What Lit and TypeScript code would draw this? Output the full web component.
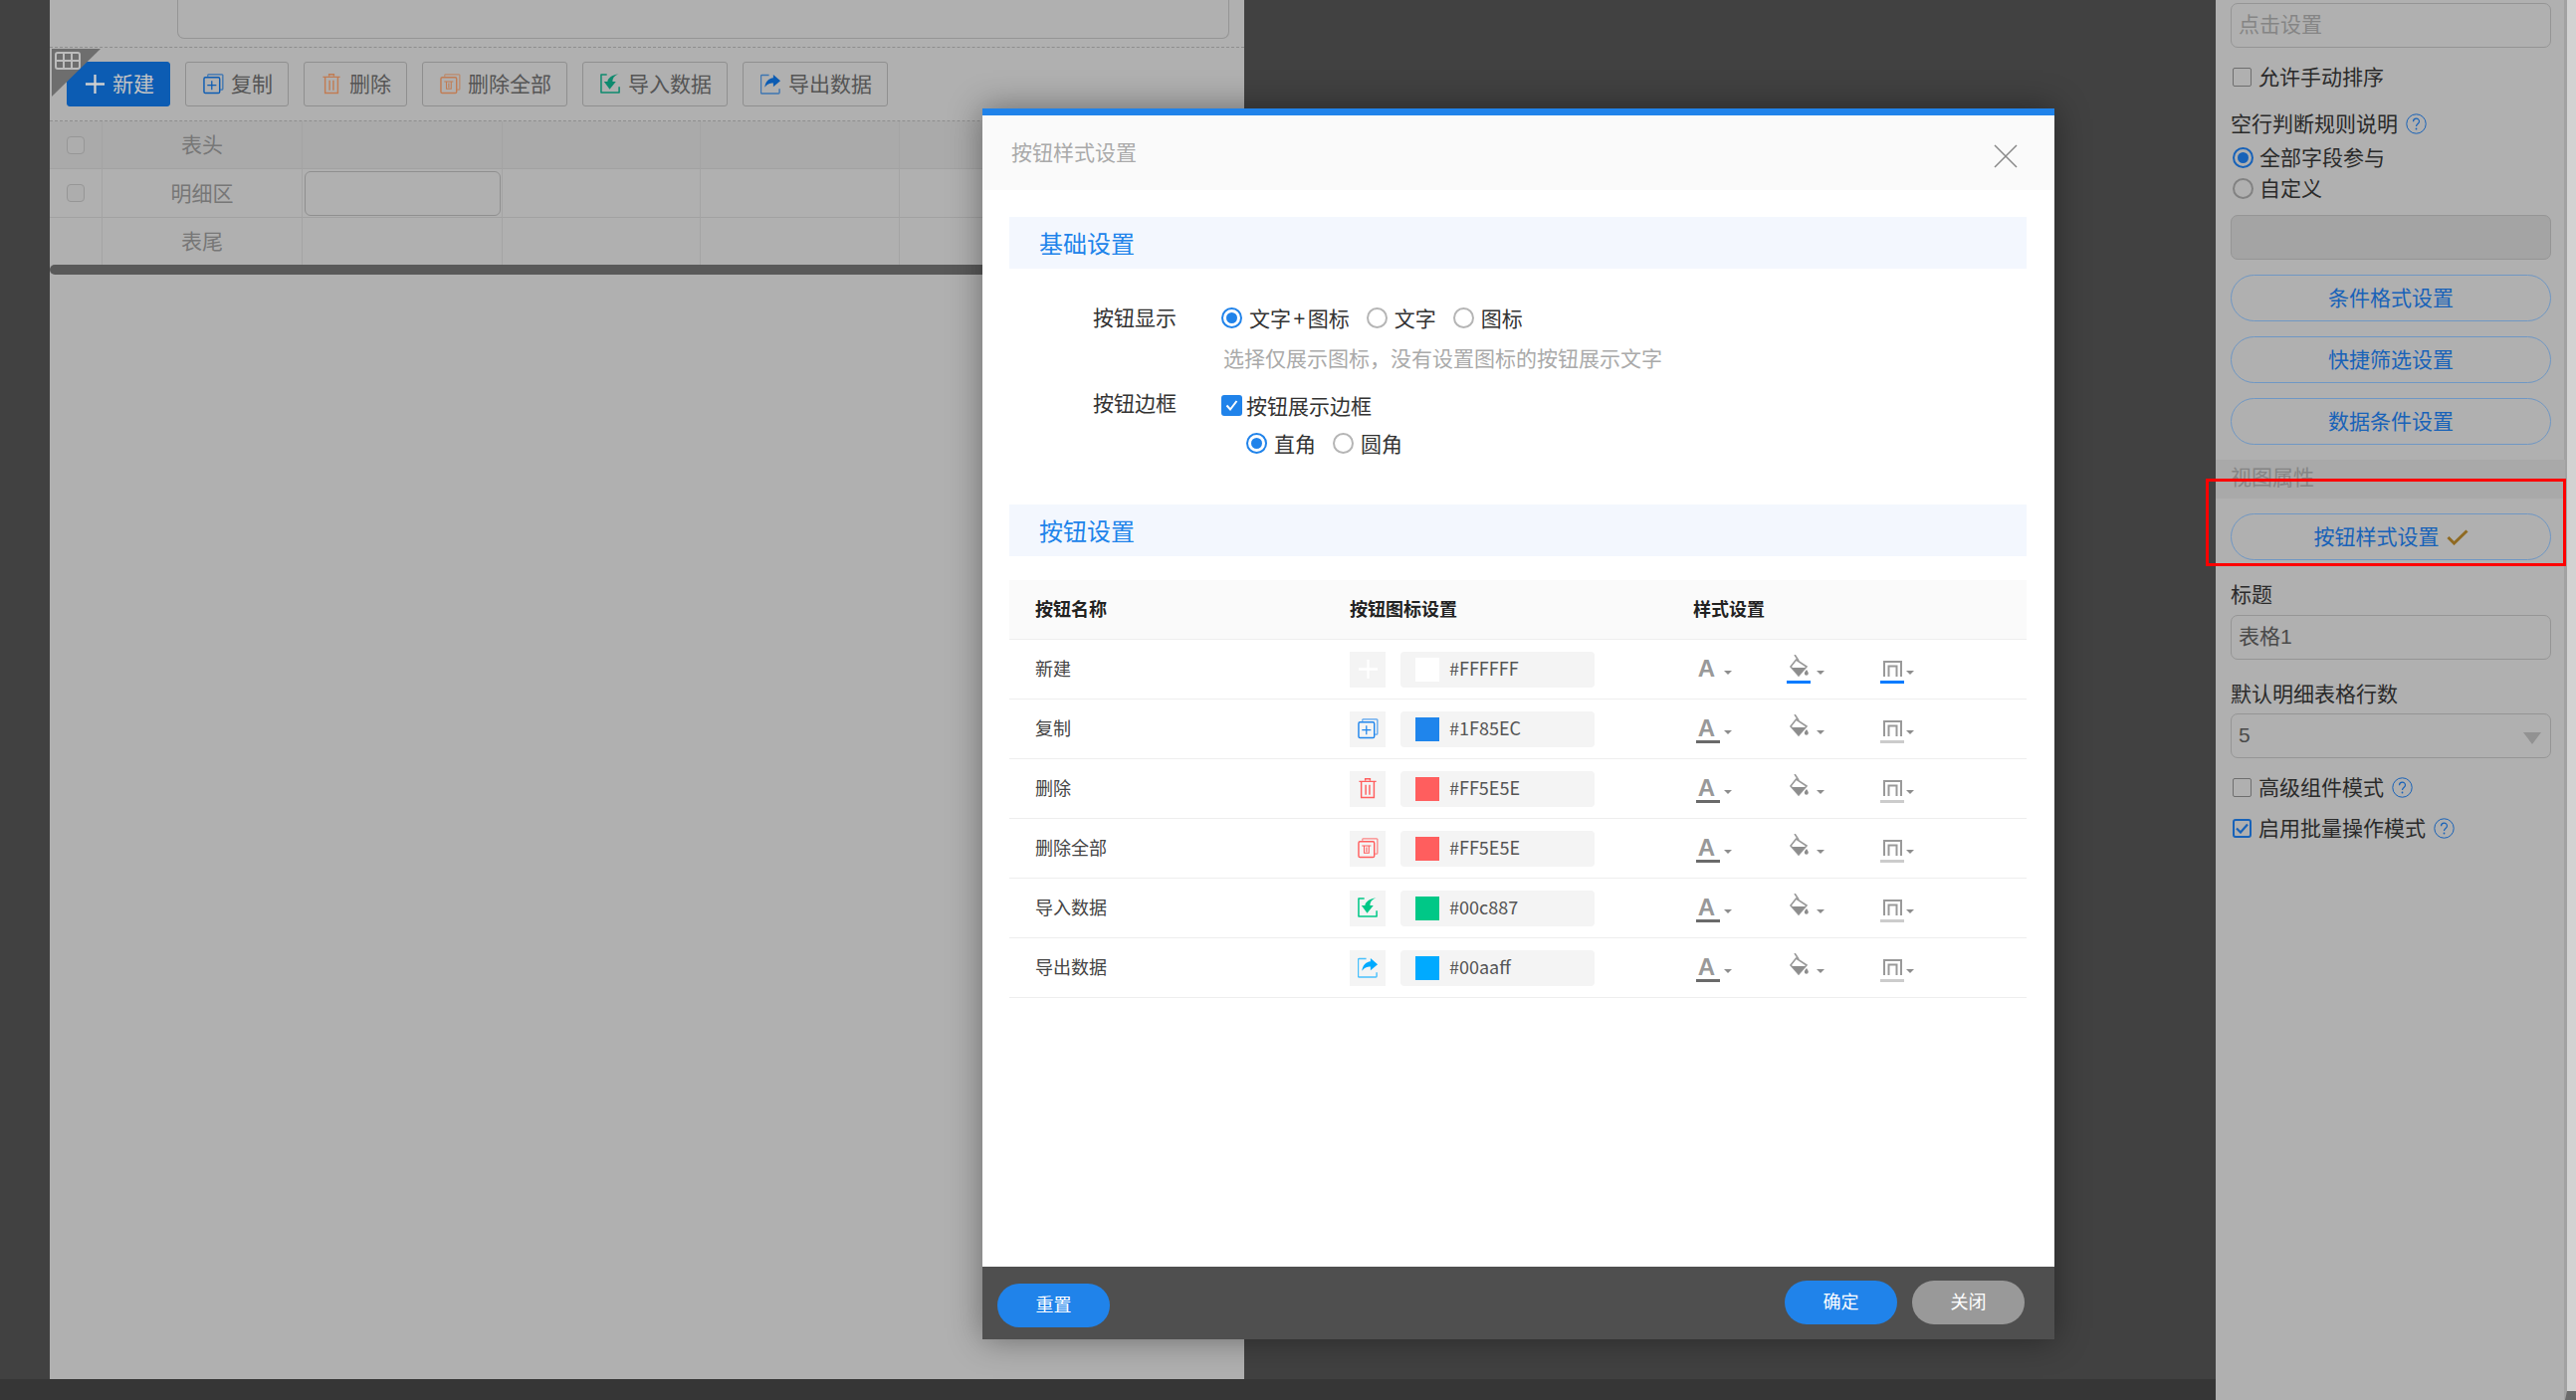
import {LitElement, html, css, svg} from 'lit';
import {customElement} from 'lit/decorators.js';

const plusIcon = (c: string) => svg`<path d="M1 11h20M11 1v20" fill="none" stroke=${c} stroke-width="2.4"/>`;
const copyIcon = (c: string) => svg`
  <path d="M5 3V1.500A1 1 0 0 1 6 .8h13.800A1 1 0 0 1 20.800 2v14a1 1 0 0 1-1 1H18" fill="none" stroke=${c} stroke-width="1.300" opacity=".75"/>
  <rect x="1" y="4" width="16.500" height="16.500" rx="1.500" fill="none" stroke=${c} stroke-width="1.500"/>
  <path d="M4.500 12.200h9.500M9.200 7.500v9.500" fill="none" stroke=${c} stroke-width="1.300"/>`;
const trashIcon = (c: string) => svg`
  <path d="M8 2.500V.8h5v1.700M1.500 3.500h18" fill="none" stroke=${c} stroke-width="1.500"/>
  <path d="M3.800 4v16.500h13.400V4M8.500 7v10.500M12.500 7v10.500" fill="none" stroke=${c} stroke-width="1.500"/>`;
const trashAllIcon = (c: string) => svg`
  <path d="M5 3V1.500A1 1 0 0 1 6 .8h13.800A1 1 0 0 1 20.800 2v14a1 1 0 0 1-1 1H18" fill="none" stroke=${c} stroke-width="1.300" opacity=".75"/>
  <rect x="1" y="4" width="16.500" height="16.500" rx="1.500" fill="none" stroke=${c} stroke-width="1.500"/>
  <path d="M4.500 8.300h9.500M6.800 8.500v7.500h5V8.500M9.300 10v5" fill="none" stroke=${c} stroke-width="1.100"/>`;
const importIcon = (c: string) => svg`
  <path d="M7 1H1v19h19v-6" fill="none" stroke=${c} stroke-width="1.600" stroke-linejoin="round"/>
  <path d="M18 .5c-5 1.500-6.500 4.500-6.500 8H15l-6.500 8-6-8h3.700C6.500 5 10.500 1 18 .5z" fill=${c} transform="translate(1.500 0)"/>`;
const exportIcon = (c: string) => svg`
  <path d="M9 1.500H1.500a1 1 0 0 0-1 1V20a1 1 0 0 0 1 1H19a1 1 0 0 0 1-1v-4" fill="none" stroke=${c} stroke-width="1.500" opacity=".7"/>
  <path d="M13.500 1 21 7.500 13.500 14v-4c-4 0-6.500 1-9 4.500 .5-5.500 4-9.500 9-10z" fill=${c}/>`;

const icon = (body: unknown, size = 21) =>
  html`<svg width=${size} height=${size} viewBox="0 0 22 22">${body}</svg>`;

const help = html`<svg class="help" width="21" height="21" viewBox="0 0 21 21">
  <circle cx="10.500" cy="10.500" r="9.700" fill="none" stroke="currentColor" stroke-width="1"/>
  <path d="M7.500 8.200c0-4 6-4 6 -.2 0 2.500-3 2.500-3 5" fill="none" stroke="currentColor" stroke-width="1.200"/>
  <circle cx="10.500" cy="15.500" r=".9" fill="currentColor"/>
</svg>`;

const toolbar = [
  {name: '复制', icon: copyIcon, color: '#0c5cb3'},
  {name: '删除', icon: trashIcon, color: '#c17c53'},
  {name: '删除全部', icon: trashAllIcon, color: '#c17c53'},
  {name: '导入数据', icon: importIcon, color: '#0e8a6e'},
  {name: '导出数据', icon: exportIcon, color: '#0c5cb3'},
];

const rows = [
  {name: '新建', icon: plusIcon, color: '#FFFFFF', hex: '#FFFFFF', first: true},
  {name: '复制', icon: copyIcon, color: '#1F85EC', hex: '#1F85EC', first: false},
  {name: '删除', icon: trashIcon, color: '#FF5E5E', hex: '#FF5E5E', first: false},
  {name: '删除全部', icon: trashAllIcon, color: '#FF5E5E', hex: '#FF5E5E', first: false},
  {name: '导入数据', icon: importIcon, color: '#00c887', hex: '#00c887', first: false},
  {name: '导出数据', icon: exportIcon, color: '#00aaff', hex: '#00aaff', first: false},
];

const gridCols = [53, 201, 201, 199, 200, 201, 145];

@customElement('app-root')
export class AppRoot extends LitElement {
  static styles = css`
    :host {
      display: block;
      position: relative;
      width: 2588px;
      height: 1407px;
      overflow: hidden;
      background: #414141;
      color: #333;
      font: 21px/30px "Noto Sans CJK SC", "Noto Sans", sans-serif;
    }
    * { box-sizing: border-box; }
    .page { display: flex; height: 100%; }
    .left { width: 2226px; display: flex; flex-direction: column; }
    .work { flex: 1; padding-left: 50px; }
    .statusbar { height: 21px; background: #363636; }

    /* canvas on the left */
    .canvas { position: relative; width: 1200px; height: 100%; background: #b0b0b0; }
    .topbox {
      width: 1057px; height: 39px; margin-left: 128px;
      border: 1px solid #959595; border-top: 0; border-radius: 0 0 7px 7px;
    }
    .toolbar {
      display: flex; gap: 15px; height: 75px; margin-top: 8px; padding: 14px 17px;
      border-top: 1px dashed #8e8e8e; border-bottom: 1px dashed #8e8e8e;
    }
    .tb {
      display: flex; align-items: center; gap: 7px; height: 45px; padding: 0 15px 0 17px;
      border: 1px solid #8f8f8f; border-radius: 3px; color: #555; white-space: nowrap;
    }
    .tb span { margin-bottom: 3px; }
    .tb.primary { background: #0c5cb3; border-color: #0c5cb3; color: #c4c4c4; }
    .corner {
      position: absolute; left: 2px; top: 49px; width: 49px; height: 48px;
      background: #6e6e6e; clip-path: polygon(0 0, 100% 0, 0 100%);
    }
    .corner-grid { position: absolute; left: 5px; top: 52px; }
    .grid { display: grid; }
    .cell {
      height: 49px; display: flex; align-items: center; justify-content: center;
      border-right: 1px solid #a4a4a4; border-bottom: 1px solid #a2a2a2; color: #777;
    }
    .cell.head { height: 48px; background: #aaaaaa; }
    .cell.end { border-bottom: 0; height: 47px; }
    .cell .lab { margin-bottom: 3px; }
    .cb {
      width: 18px; height: 18px; border: 1px solid #969696; border-radius: 4px; background: #adadad;
    }
    .slot { width: 197px; height: 45px; border: 1px solid #8f8f8f; border-radius: 6px; }
    .hscroll { height: 10px; background: #595959; border-radius: 5px 0 0 5px; }

    /* property panel on the right */
    .panel {
      position: relative; width: 351px; background: #b0b0b0; color: #2a2a2a;
      box-shadow: inset -1px 0 #a2a2a2;
      font-family: "Liberation Sans", "Noto Sans CJK SC", sans-serif;
    }
    .strip { width: 11px; background: #d2d2d2; border-left: 2px solid #a2a2a2; border-bottom: 9px solid #6a6a6a; }
    .field {
      display: flex; align-items: center; height: 45px; margin: 0 15px; padding: 0 7px 1px;
      border: 1px solid #959595; border-radius: 7px; color: #4a4a4a; position: relative;
    }
    .panel > * { width: 322px; }
    .field.hint { color: #858585; }
    .field.off { background: #a4a4a4; }
    .line { display: flex; align-items: center; height: 30px; margin: 0 15px; padding: 0 0 1px 2px; }
    .line.flat { padding-left: 0; }
    .help { color: #1862b8; flex: none; }
    .line .help { margin-left: 8px; }
    .box { width: 19px; height: 19px; margin-right: 7px; border: 1px solid #6e6e6e; border-radius: 2px; flex: none; }
    .box.on { display: flex; align-items: center; justify-content: center; border: 2px solid #1862b8; border-radius: 3px; }
    .dot {
      display: flex; align-items: center; justify-content: center; flex: none;
      width: 21px; height: 21px; border: 2px solid #828282; border-radius: 50%; margin-right: 6px;
    }
    .dot.on { border-color: #1862b8; }
    .dot.on::after { content: ""; width: 11px; height: 11px; border-radius: 50%; background: #1862b8; }
    .pill {
      display: flex; align-items: center; justify-content: center; gap: 7px; height: 47px; margin: 15px 15px 0;
      border: 1px solid #6f97c4; border-radius: 24px; color: #1862b8;
    }
    .panel > .secline {
      width: 351px; height: 39px; margin-top: 15px; padding: 3px 0 0 15px; background: #a9a9a9; color: #858585;
    }
    .caret-big {
      position: absolute; right: 9px; top: 18px; width: 0; height: 0;
      border: 9.500px solid transparent; border-top: 12px solid #929292; border-bottom: 0;
    }
    .panel > .marker {
      position: absolute; left: -10px; top: 481px; width: 362px; height: 88px; border: 3px solid #ff0000;
    }

    /* dialog */
    .modal {
      position: absolute; left: 987px; top: 109px; width: 1077px; height: 1237px;
      display: flex; flex-direction: column; background: #fff;
      border-top: 7px solid #2083ea; box-shadow: 0 0 32px rgba(0, 0, 0, .4);
    }
    .mhead {
      display: flex; align-items: center; justify-content: space-between; height: 75px;
      padding: 0 37px 0 29px; background: #fafafa; color: #aaa; flex: none;
    }
    .mhead span { margin-bottom: 3px; }
    .mhead svg { margin-top: 7px; }
    .mbody { flex: 1; padding: 27px 28px 0 27px; }
    .sec {
      height: 52px; padding-left: 30px; background: #f3f7fe; color: #2083ea;
      font-size: 24px; line-height: 51px;
    }
    .form { height: 237px; padding: 35px 0 0 84px; color: #333; }
    .frow { display: flex; }
    .flabel { width: 129px; height: 28px; line-height: 27px; flex: none; }
    .flabel.low { margin-top: 2px; }
    .opts { display: flex; align-items: center; height: 28px; line-height: 26px; }
    .opts .dot { margin-right: 7px; border-color: #b5b5b5; }
    .opts .dot.on { border-color: #2083ea; }
    .opts .dot.on::after { background: #2083ea; }
    .opts span + .dot { margin-left: 17px; }
    .opts .wide em { margin: 0 2.500px; font-style: normal; }
    .fhint { height: 28px; margin: 13px 0 15px 129px; padding-left: 2px; line-height: 26px; color: #aaa; }
    .tick {
      display: flex; align-items: center; justify-content: center;
      width: 21px; height: 21px; margin-right: 4px; border-radius: 3px; background: #2083ea;
    }
    .sub { display: flex; flex-direction: column; gap: 10px; margin-top: 4px; }
    .sub .opts { padding-left: 25px; }
    .sub .opts.flush { padding-left: 0; }
    .tbl { margin-top: 24px; font-size: 18px; color: #444; }
    .tr { display: grid; grid-template-columns: 342px 345px 1fr; height: 60px; border-bottom: 1px solid #eee; align-items: center; }
    .tr.th { height: 60px; background: #fafafa; color: #222; font-weight: 700; }
    .tr .nm { padding-bottom: 3px; }
    .tr > :first-child { padding-left: 26px; }
    .pick { display: flex; align-items: center; gap: 15px; }
    .tile { display: flex; align-items: center; justify-content: center; width: 36px; height: 36px; background: #f4f4f4; }
    .color {
      display: flex; align-items: center; gap: 10px; width: 195px; height: 36px; padding-left: 15px;
      border-radius: 4px; background: #f4f4f4; color: #555;
    }
    .color b { font-weight: 400; margin-bottom: 3px; }
    .swatch { width: 24px; height: 24px; }
    .tools { display: flex; align-self: start; padding: 15px 0 0 3px; }
    .tool { position: relative; height: 29px; }
    .tool i { display: block; width: 24px; height: 3px; margin-top: 2px; }
    .gl { display: block; width: 24px; height: 24px; }
    .letter {
      padding-right: 3px; font: 700 24px/27px "Liberation Sans", sans-serif; color: #999; text-align: center;
    }
    .caret {
      position: absolute; top: 16px; width: 0; height: 0;
      border: 4px solid transparent; border-top: 4px solid #8d8d8d; border-bottom: 0;
    }
    .mfoot {
      display: flex; justify-content: space-between; height: 73px; flex: none;
      padding: 14px 30px 0 15px; background: #4f4f4f;
    }
    .fbtn {
      display: flex; align-items: center; justify-content: center; width: 113px; height: 44px;
      padding-bottom: 4px; border-radius: 22px; background: #2083ea; color: #fff; font-size: 18px;
    }
    .fbtn.low { margin-top: 3px; }
    .fbtn.grey { background: #999; }
    .fright { display: flex; gap: 15px; }
  `;

  private renderTool(width: number, caret: number, under: string, glyph: unknown) {
    return html`<div class="tool" style="width:${width}px">
      ${glyph}
      <i style="background:${under}"></i>
      <span class="caret" style="left:${caret}px"></span>
    </div>`;
  }

  private renderCanvas() {
    const labels = ['表头', '明细区', '表尾'];
    return html`<div class="canvas">
      <div class="topbox"></div>
      <div class="toolbar">
        <div class="tb primary">${icon(plusIcon('#d0d0d0'))}<span>新建</span></div>
        ${toolbar.map(b => html`<div class="tb">${icon(b.icon(b.color))}<span>${b.name}</span></div>`)}
      </div>
      <div class="corner"></div>
      <svg class="corner-grid" width="26" height="18" viewBox="0 0 26 18">
        <rect x="1" y="1" width="24" height="16" rx="2" fill="none" stroke="#bcbcbc" stroke-width="2"/>
        <path d="M9 1v16M17 1v16M1 9h24" stroke="#bcbcbc" stroke-width="2"/>
      </svg>
      <div class="grid" style="grid-template-columns:${gridCols.map(w => w + 'px').join(' ')}">
        ${labels.map((label, r) =>
          gridCols.map((_, c) => html`<div class="cell ${r === 0 ? 'head' : ''} ${r === 2 ? 'end' : ''}">
            ${c === 0 && r < 2 ? html`<span class="cb"></span>` : ''}
            ${c === 1 ? html`<span class="lab">${label}</span>` : ''}
            ${c === 2 && r === 1 ? html`<span class="slot"></span>` : ''}
          </div>`)
        )}
      </div>
      <div class="hscroll"></div>
    </div>`;
  }

  private renderPanel() {
    const check = html`<svg width="13" height="11" viewBox="0 0 13 11"><path d="M1 5.500 5 9.500 12 1.500" fill="none" stroke="#1862b8" stroke-width="2.200"/></svg>`;
    return html`<div class="panel">
      <div class="field hint" style="margin-top:3px">点击设置</div>
      <div class="line" style="margin-top:15px"><span class="box"></span>允许手动排序</div>
      <div class="line flat" style="margin-top:17px">空行判断规则说明${help}</div>
      <div class="line" style="margin-top:4px"><span class="dot on"></span>全部字段参与</div>
      <div class="line" style="margin-top:1px"><span class="dot"></span>自定义</div>
      <div class="field off" style="margin-top:11px"></div>
      <div class="pill">条件格式设置</div>
      <div class="pill">快捷筛选设置</div>
      <div class="pill">数据条件设置</div>
      <div class="secline">视图属性</div>
      <div class="pill">按钮样式设置
        <svg width="22" height="16" viewBox="0 0 22 16"><path d="M1.500 8 7.500 14 20.500 1.500" fill="none" stroke="#8f6a22" stroke-width="3"/></svg>
      </div>
      <div class="line flat" style="margin-top:20px">标题</div>
      <div class="field" style="margin-top:5px">表格1</div>
      <div class="line flat" style="margin-top:20px">默认明细表格行数</div>
      <div class="field" style="margin-top:4px">5<span class="caret-big"></span></div>
      <div class="line" style="margin-top:15px"><span class="box"></span>高级组件模式${help}</div>
      <div class="line" style="margin-top:11px"><span class="box on">${check}</span>启用批量操作模式${help}</div>
      <div class="marker"></div>
    </div>`;
  }

  private renderRow(row: typeof rows[number]) {
    const bucket = html`<svg class="gl" viewBox="0 0 24 24">
      <path d="M8 0 12 6" stroke="#999" stroke-width="1.600" fill="none"/>
      <path d="M4 12 9.500 5 20 12 12 21z" fill="none" stroke="#999" stroke-width="1.600"/>
      <path d="M5 13H19L12 21z" fill="#8d8d8d"/>
      <path d="M22 16c-1.500 2-2.200 2.800-2.200 3.700a2 2 0 0 0 4 0c0-.9-.6-1.700-1.800-3.700z" fill="#8d8d8d" transform="translate(-2 -1)"/>
    </svg>`;
    const frame = html`<svg class="gl" viewBox="0 0 24 24">
      <path d="M4 22V7H21V22M8.500 22V11.500H16.500V22" fill="none" stroke="#999" stroke-width="2"/>
    </svg>`;
    return html`<div class="tr">
      <div class="nm">${row.name}</div>
      <div class="pick">
        <span class="tile">${icon(row.icon(row.color))}</span>
        <span class="color"><span class="swatch" style="background:${row.color}"></span><b>${row.hex}</b></span>
      </div>
      <div class="tools">
        ${this.renderTool(91, 28, row.first ? '#fff' : '#6a6a6a', html`<span class="gl letter">A</span>`)}
        ${this.renderTool(94, 30, row.first ? '#007bff' : 'transparent', bucket)}
        ${this.renderTool(34, 26, row.first ? '#007bff' : '#ccc', frame)}
      </div>
    </div>`;
  }

  private renderModal() {
    const tick = html`<svg width="13" height="13" viewBox="0 0 13 13"><path d="M1.500 6.500 5 10.500 11.500 2" fill="none" stroke="#fff" stroke-width="2"/></svg>`;
    return html`<div class="modal">
      <div class="mhead">
        <span>按钮样式设置</span>
        <svg width="24" height="24" viewBox="0 0 24 24"><path d="M1 1 23 23M23 1 1 23" stroke="#888" stroke-width="1.500"/></svg>
      </div>
      <div class="mbody">
        <div class="sec">基础设置</div>
        <div class="form">
          <div class="frow">
            <span class="flabel">按钮显示</span>
            <div class="opts">
              <b class="dot on"></b><span class="wide">文字<em>+</em>图标</span>
              <b class="dot"></b><span>文字</span>
              <b class="dot"></b><span>图标</span>
            </div>
          </div>
          <div class="fhint">选择仅展示图标，没有设置图标的按钮展示文字</div>
          <div class="frow">
            <span class="flabel low">按钮边框</span>
            <div class="sub">
              <div class="opts flush"><span class="tick">${tick}</span><span>按钮展示边框</span></div>
              <div class="opts">
                <b class="dot on"></b><span>直角</span>
                <b class="dot"></b><span>圆角</span>
              </div>
            </div>
          </div>
        </div>
        <div class="sec">按钮设置</div>
        <div class="tbl">
          <div class="tr th"><div class="nm">按钮名称</div><div class="nm">按钮图标设置</div><div class="nm">样式设置</div></div>
          ${rows.map(r => this.renderRow(r))}
        </div>
      </div>
      <div class="mfoot">
        <div class="fbtn low">重置</div>
        <div class="fright"><div class="fbtn">确定</div><div class="fbtn grey">关闭</div></div>
      </div>
    </div>`;
  }

  render() {
    return html`
      <div class="page">
        <div class="left">
          <div class="work">${this.renderCanvas()}</div>
          <div class="statusbar"></div>
        </div>
        ${this.renderPanel()}
        <div class="strip"></div>
      </div>
      ${this.renderModal()}
    `;
  }
}
